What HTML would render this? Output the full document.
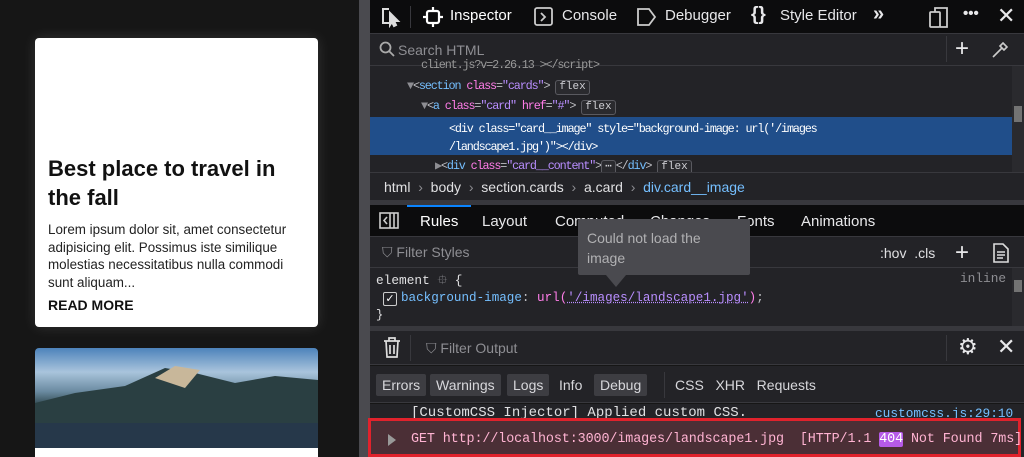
<!DOCTYPE html><html><head><style>
*{margin:0;padding:0;box-sizing:border-box}
html,body{width:1024px;height:457px;overflow:hidden}
body{background:#161616;position:relative;font-family:"Liberation Sans",sans-serif}
.a{position:absolute}
.m{font-family:"Liberation Mono",monospace;font-size:12px;white-space:pre}
.mk{letter-spacing:-1.15px;font-size:11.8px}
.t{color:#e8e8ea;font-size:15px;white-space:nowrap}
.g{color:#8e8e93}
.tag{color:#75bfff}.att{color:#ff7de9}.val{color:#b98eff}.pun{color:#bfbfc4}
.badge{display:inline-block;border:1px solid #5a5a60;border-radius:3px;font-size:11px;padding:0 3px;color:#cfcfd4;background:#2a2a2e;line-height:13px;letter-spacing:0}
.btn{position:absolute;top:374px;height:22px;background:#3d3d42;border-radius:2px;color:#d7d7db;font-size:14px;line-height:22px;padding:0 6px}
</style></head><body>
<!-- card -->
<div class="a" style="left:35px;top:38px;width:283px;height:289px;background:#fff;border-radius:4px;box-shadow:0 0 14px rgba(255,255,255,.12)"></div>
<div class="a" style="left:48px;top:154px;width:260px;font-size:22px;font-weight:bold;line-height:29px;color:#111">Best place to travel in the fall</div>
<div class="a" style="left:48px;top:221px;width:252px;font-size:13.4px;line-height:17.5px;color:#222">Lorem ipsum dolor sit, amet consectetur adipisicing elit. Possimus iste similique molestias necessitatibus nulla commodi sunt aliquam...</div>
<div class="a" style="left:48px;top:297px;font-size:14px;font-weight:bold;color:#111">READ MORE</div>
<div class="a" style="left:35px;top:348px;width:283px;height:109px;border-radius:4px 4px 0 0;overflow:hidden;background:linear-gradient(#4d83bb 0%,#a9c4dc 22%,#6a8aa0 40%,#243a3e 55%,#1b2b2c 70%,#5b7f9a 78%,#123 92%,#fff 100%)">
<svg class="a" style="left:0;top:0" width="283" height="109"><polygon points="0,55 40,45 90,38 130,20 160,25 200,35 240,28 283,32 283,75 0,75" fill="#2a3f42"/><polygon points="120,30 140,18 165,22 150,40" fill="#c8b79a"/><rect y="75" width="283" height="25" fill="#26384a"/><rect y="100" width="283" height="9" fill="#fff"/></svg></div>
<!-- scrollbar -->
<div class="a" style="left:359px;top:0;width:11px;height:457px;background:#4a4a4f"></div>
<!-- devtools -->
<div class="a" style="left:370px;top:0;width:654px;height:33px;background:#0c0c0d"></div>
<div class="a" style="left:370px;top:33px;width:654px;height:139px;background:#232327;border-top:1px solid #38383d"></div>
<div class="a" style="left:370px;top:65px;width:654px;height:1px;background:#38383d"></div>
<!-- toolbar -->
<svg class="a" style="left:380px;top:6px" width="22" height="22" fill="none" stroke="#ddd" stroke-width="2"><path d="M9 3H3v14h6"/><path d="M10 7l8 8-4 0 2 4-2 1-2-4-2 3z" fill="#ddd"/></svg>
<div class="a" style="left:410px;top:6px;width:1px;height:22px;background:#38383d"></div>
<svg class="a" style="left:422px;top:6px" width="22" height="22" fill="none" stroke="#fff" stroke-width="2.2"><rect x="5" y="5" width="12" height="12" rx="2"/><path d="M11 1v4M11 17v4M1 11h4M17 11h4"/></svg>
<div class="a t" style="left:450px;top:7px;color:#fff">Inspector</div>
<svg class="a" style="left:534px;top:7px" width="20" height="20" fill="none" stroke="#ccc" stroke-width="1.8"><rect x="1" y="1" width="17" height="17" rx="2"/><path d="M7 6l4 4-4 4"/></svg>
<div class="a t" style="left:562px;top:7px">Console</div>
<svg class="a" style="left:636px;top:7px" width="22" height="20" fill="none" stroke="#ccc" stroke-width="1.8"><path d="M2 2h11l6 8-6 8H2z"/></svg>
<div class="a t" style="left:665px;top:7px">Debugger</div>
<div class="a t" style="left:751px;top:4px;font-size:19px;font-weight:bold">{}</div>
<div class="a t" style="left:780px;top:7px">Style Editor</div>
<div class="a t" style="left:873px;top:3px;font-size:20px;font-weight:bold">»</div>
<svg class="a" style="left:928px;top:6px" width="22" height="22" fill="none" stroke="#ccc" stroke-width="1.8"><rect x="2" y="6" width="10" height="15" rx="1"/><path d="M7 6V2h12v19h-7"/></svg>
<div class="a t" style="left:963px;top:5px;font-weight:bold">•••</div>
<div class="a t" style="left:997px;top:3px;font-size:22px">✕</div>
<!-- search -->
<svg class="a" style="left:379px;top:41px" width="16" height="16" fill="none" stroke="#aaa" stroke-width="1.8"><circle cx="6.5" cy="6.5" r="5"/><path d="M10 10l5 5"/></svg>
<div class="a" style="left:398px;top:42px;color:#8e8e93;font-size:14px">Search HTML</div>
<div class="a" style="left:946px;top:36px;width:1px;height:26px;background:#38383d"></div>
<div class="a t" style="left:955px;top:35px;font-size:24px">+</div>
<svg class="a" style="left:990px;top:40px" width="20" height="20" fill="none" stroke="#ccc" stroke-width="1.6"><path d="M3 17l9-9M10 6l4 4M13 3l4 4-3 3-4-4z"/></svg>
<!-- markup -->
<div class="a m mk g" style="left:421px;top:58px;color:#999">client.js?v=2.26.13 &gt;&lt;/script&gt;</div>
<div class="a m mk" style="left:407px;top:79px"><span class="g">▼</span><span class="pun">&lt;</span><span class="tag">section</span> <span class="att">class</span><span class="pun">=</span><span class="val">"cards"</span><span class="pun">&gt;</span> <span class="badge">flex</span></div>
<div class="a m mk" style="left:421px;top:99px"><span class="g">▼</span><span class="pun">&lt;</span><span class="tag">a</span> <span class="att">class</span><span class="pun">=</span><span class="val">"card"</span> <span class="att">href</span><span class="pun">=</span><span class="val">"#"</span><span class="pun">&gt;</span> <span class="badge">flex</span></div>
<div class="a" style="left:370px;top:117px;width:642px;height:38px;background:#204e8a"></div>
<div class="a m mk" style="left:449px;top:120px;color:#fff;line-height:18px">&lt;div class="card__image" style="background-image: url('/images
/landscape1.jpg')"&gt;&lt;/div&gt;</div>
<div class="a m mk" style="left:435px;top:158px"><span class="g">▶</span><span class="pun">&lt;</span><span class="tag">div</span> <span class="att">class</span><span class="pun">=</span><span class="val">"card__content"</span><span class="pun">&gt;</span><span class="badge">⋯</span><span class="pun">&lt;/</span><span class="tag">div</span><span class="pun">&gt;</span> <span class="badge">flex</span></div>
<div class="a" style="left:1012px;top:66px;width:12px;height:106px;background:#2a2a2e"></div>
<div class="a" style="left:1014px;top:106px;width:8px;height:16px;background:#737373"></div>
<!-- breadcrumb -->
<div class="a" style="left:370px;top:172px;width:654px;height:28px;background:#232327;border-top:1px solid #38383d"></div>
<div class="a" style="left:384px;top:179px;font-size:14px;color:#e0e0e2;white-space:pre">html  <span class="g">›</span>  body  <span class="g">›</span>  section.cards  <span class="g">›</span>  a.card  <span class="g">›</span>  <span style="color:#75bfff">div.card__image</span></div>
<div class="a" style="left:370px;top:200px;width:654px;height:5px;background:#38383d"></div>
<!-- rules tabs -->
<div class="a" style="left:370px;top:205px;width:654px;height:31px;background:#0c0c0d"></div>
<div class="a" style="left:407px;top:205px;width:64px;height:2px;background:#0a84ff"></div>
<svg class="a" style="left:378px;top:211px" width="22" height="20" fill="none" stroke="#ccc" stroke-width="1.6"><rect x="2" y="2" width="18" height="15"/><path d="M12 2v15M16 2v15M9 6l-3 3.5 3 3.5" /></svg>
<div class="a t" style="left:420px;top:213px;color:#fff">Rules</div>
<div class="a t" style="left:482px;top:213px">Layout</div>
<div class="a t" style="left:555px;top:213px">Computed</div>
<div class="a t" style="left:650px;top:213px">Changes</div>
<div class="a t" style="left:737px;top:213px">Fonts</div>
<div class="a t" style="left:801px;top:213px">Animations</div>
<!-- filter styles -->
<div class="a" style="left:370px;top:236px;width:654px;height:32px;background:#232327;border-top:1px solid #38383d;border-bottom:1px solid #38383d"></div>
<div class="a" style="left:382px;top:244px;color:#8e8e93;font-size:14px">⛉ Filter Styles</div>
<div class="a" style="left:880px;top:245px;color:#e0e0e2;font-size:14px;white-space:pre">:hov  .cls</div>
<div class="a t" style="left:955px;top:239px;font-size:24px">+</div>
<svg class="a" style="left:992px;top:243px" width="18" height="20" fill="none" stroke="#ddd" stroke-width="1.6"><path d="M2 1h9l5 5v13H2z"/><path d="M5 9h8M5 12h8M5 15h6"/></svg>
<!-- rules content -->
<div class="a" style="left:370px;top:268px;width:654px;height:58px;background:#232327"></div>
<div class="a m" style="left:376px;top:271px;color:#e0e0e2;font-size:12.8px">element <span class="g">⯐</span> {</div>
<div class="a m" style="left:960px;top:271px;color:#8e8e93;font-size:12.8px">inline</div>
<div class="a" style="left:383px;top:292px;width:14px;height:14px;border:1px solid #ccc;border-radius:2px;color:#fff;font-size:11px;line-height:12px;text-align:center">✓</div>
<div class="a m" style="left:401px;top:291px;font-size:12.6px"><span class="tag">background-image</span><span class="pun">: </span><span class="att">url(</span><span class="val" style="text-decoration:underline dotted">'/images/landscape1.jpg'</span><span class="att">)</span><span class="pun">;</span></div>
<div class="a m" style="left:376px;top:308px;color:#e0e0e2">}</div>
<div class="a" style="left:1012px;top:268px;width:12px;height:58px;background:#2a2a2e"></div>
<div class="a" style="left:1014px;top:280px;width:8px;height:12px;background:#737373"></div>
<!-- tooltip -->
<div class="a" style="left:578px;top:219px;width:172px;height:56px;background:#4a4a4f;border-radius:2px;color:#b1b1b3;font-size:14px;line-height:20px;padding:9px 40px 9px 9px">Could not load the image</div>
<div class="a" style="left:606px;top:275px;width:0;height:0;border-left:10px solid transparent;border-right:10px solid transparent;border-top:12px solid #4a4a4f"></div>
<div class="a" style="left:370px;top:326px;width:654px;height:5px;background:#38383d"></div>
<!-- console toolbar -->
<div class="a" style="left:370px;top:331px;width:654px;height:34px;background:#232327;border-bottom:1px solid #38383d"></div>
<svg class="a" style="left:383px;top:337px" width="18" height="22" fill="none" stroke="#ddd" stroke-width="1.7"><path d="M1 4h16M6 4V1h6v3M3 4l1 16h10l1-16M7 8v9M11 8v9"/></svg>
<div class="a" style="left:410px;top:335px;width:1px;height:26px;background:#38383d"></div>
<div class="a" style="left:426px;top:340px;color:#8e8e93;font-size:14px">⛉ Filter Output</div>
<div class="a" style="left:946px;top:335px;width:1px;height:26px;background:#38383d"></div>
<div class="a t" style="left:958px;top:334px;font-size:22px">⚙</div>
<div class="a t" style="left:997px;top:334px;font-size:22px">✕</div>
<!-- filter buttons -->
<div class="a" style="left:370px;top:366px;width:654px;height:37px;background:#232327;border-bottom:1px solid #38383d"></div>
<div class="btn" style="left:376px">Errors</div>
<div class="btn" style="left:430px">Warnings</div>
<div class="btn" style="left:507px">Logs</div>
<div class="a" style="left:559px;top:377px;color:#d7d7db;font-size:14px">Info</div>
<div class="btn" style="left:594px">Debug</div>
<div class="a" style="left:664px;top:372px;width:1px;height:26px;background:#38383d"></div>
<div class="a" style="left:675px;top:377px;color:#d7d7db;font-size:14px;white-space:pre">CSS   XHR   Requests</div>
<!-- logs -->
<div class="a" style="left:370px;top:404px;width:654px;height:53px;background:#232327"></div>
<div class="a m" style="left:411px;top:405px;color:#e0e0e2;font-size:14px">[CustomCSS Injector] Applied custom CSS.</div>
<div class="a m" style="left:875px;top:406px;color:#75bfff;text-decoration:underline;font-size:12.8px">customcss.js:29:10</div>
<div class="a" style="left:368px;top:418px;width:653px;height:39px;border:3px solid #e0222c;background:#4b2f36"></div>
<div class="a" style="left:388px;top:434px;width:0;height:0;border-top:6px solid transparent;border-bottom:6px solid transparent;border-left:8px solid #999"></div>
<div class="a m" style="left:411px;top:432px;color:#ffb3d2;font-size:13.4px;letter-spacing:-0.1px">GET http://localhost:3000/images/landscape1.jpg  [HTTP/1.1 <span style="background:#b65ae8;color:#fff;border-radius:2px">404</span> Not Found 7ms]</div>
</body></html>
